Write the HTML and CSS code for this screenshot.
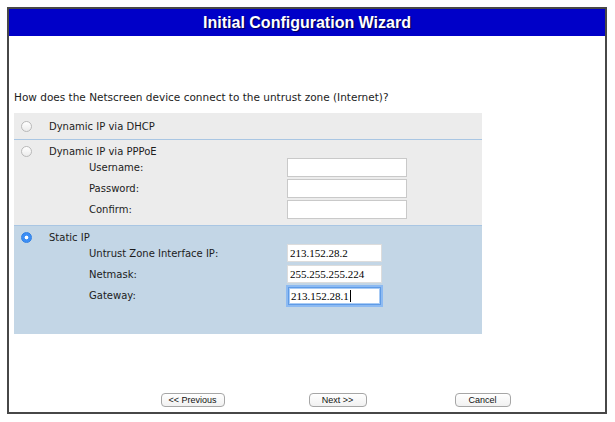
FILE: index.html
```html
<!DOCTYPE html>
<html lang="en">
<head>
    <meta charset="UTF-8">
    <meta name="viewport" content="width=device-width, initial-scale=1.0">
    <title>Initial Configuration Wizard</title>
    <link rel="stylesheet" href="styles.css">
</head>
<body>
    <div class="wizard">
        <div class="title">Initial Configuration Wizard</div>
        <div class="content">
            <p class="question">How does the Netscreen device connect to the untrust zone (Internet)?</p>
            <div class="options">
                <div class="option dhcp">
                    <label class="choice"><input type="radio" name="conn"><span>Dynamic IP via DHCP</span></label>
                </div>
                <div class="option pppoe">
                    <label class="choice"><input type="radio" name="conn"><span>Dynamic IP via PPPoE</span></label>
                    <div class="fields">
                        <label for="user">Username:</label>
                        <input type="text" id="user">
                        <label for="pass">Password:</label>
                        <input type="password" id="pass">
                        <label for="confirm">Confirm:</label>
                        <input type="password" id="confirm">
                    </div>
                </div>
                <div class="option static selected">
                    <label class="choice"><input type="radio" name="conn" checked><span>Static IP</span></label>
                    <div class="fields">
                        <label for="ip">Untrust Zone Interface IP:</label>
                        <input type="text" id="ip" value="213.152.28.2">
                        <label for="mask">Netmask:</label>
                        <input type="text" id="mask" value="255.255.255.224">
                        <label>Gateway:</label>
                        <div class="field focused">213.152.28.1<span class="caret"></span></div>
                    </div>
                </div>
            </div>
            <div class="buttons">
                <button class="prev">&lt;&lt; Previous</button>
                <button class="next">Next &gt;&gt;</button>
                <button class="cancel">Cancel</button>
            </div>
        </div>
    </div>
</body>
</html>
```

FILE: styles.css
```css
body {
    margin: 0;
    background: #fff;
    font-family: "DejaVu Sans", Verdana, sans-serif;
    font-size: 10px;
    color: #1c1c1c;
}
.wizard {
    margin: 7px 0 0 7px;
    width: 600px;
    height: 407px;
    border: 2px solid #474747;
    box-sizing: border-box;
}
.title {
    height: 27px;
    line-height: 27px;
    background-color: #0000c8;
    color: #fff;
    text-align: center;
    font-family: "Liberation Sans", Arial, sans-serif;
    font-weight: bold;
    font-size: 16px;
    text-shadow: 1px 1px 1px #000050;
}
.content {
    padding: 0 5px;
}
.question {
    margin: 54px 0 9px 0;
    line-height: 14px;
    font-size: 10.5px;
}
.options {
    width: 468px;
}
.option {
    background-color: #ececec;
    border-bottom: 1px solid #a9c6e3;
}
.option.dhcp {
    padding: 6px 0;
}
.option.pppoe {
    padding: 4px 0 6px 0;
}
.option.static {
    padding: 4px 0 29px 0;
    border-bottom: none;
}
.option.selected {
    background-color: #c3d6e6;
}
.choice {
    display: flex;
    align-items: center;
    height: 14px;
    padding-left: 7px;
}
.choice input {
    appearance: none;
    -webkit-appearance: none;
    width: 11px;
    height: 11px;
    margin: 0 17px 0 0;
    border: 1px solid #b9b9b9;
    border-radius: 50%;
    background: linear-gradient(#ffffff, #ebebeb);
    box-sizing: border-box;
}
.choice input:checked {
    border-color: #2f7fe4;
    background: radial-gradient(circle, #fff 0 1.6px, #3c8ef5 2.2px);
}
.fields {
    display: grid;
    grid-template-columns: 198px 120px;
    row-gap: 2px;
    margin-left: 75px;
    align-items: center;
}
.fields input, .field {
    height: 19px;
    border: 1px solid #c9c9c9;
    background: #fff;
    padding: 0 2px;
    box-sizing: border-box;
    font-family: "Liberation Serif", "Times New Roman", serif;
    font-size: 11px;
    color: #000;
    outline: none;
}
.static .fields {
    grid-template-columns: 198px 95px;
    row-gap: 3px;
}
.static .fields input, .static .field {
    height: 18px;
    border-color: #dcdcdc;
}
.field.focused {
    display: flex;
    align-items: center;
    border: 1px solid #5f9be6;
    box-shadow: 0 0 0 2px #8cbaf2, inset 0 0 0 1px #a8cbf5;
    margin: 1px 1px 0 1px;
}
.caret {
    display: inline-block;
    width: 1px;
    height: 12px;
    background: #000;
    margin-left: 1px;
}
.buttons {
    display: grid;
    grid-template-columns: 145px 145px 145px;
    justify-items: center;
    margin: 59px 0 0 106px;
}
.buttons button {
    height: 14px;
    padding: 0;
    border: 1px solid #a6a6a6;
    border-radius: 4px;
    background: linear-gradient(#ffffff, #f1f1f1);
    font-family: "Liberation Sans", Arial, sans-serif;
    font-size: 9px;
    line-height: 12px;
    color: #111;
}
.prev {
    width: 64px;
}
.next {
    width: 58px;
}
.cancel {
    width: 56px;
}
```
